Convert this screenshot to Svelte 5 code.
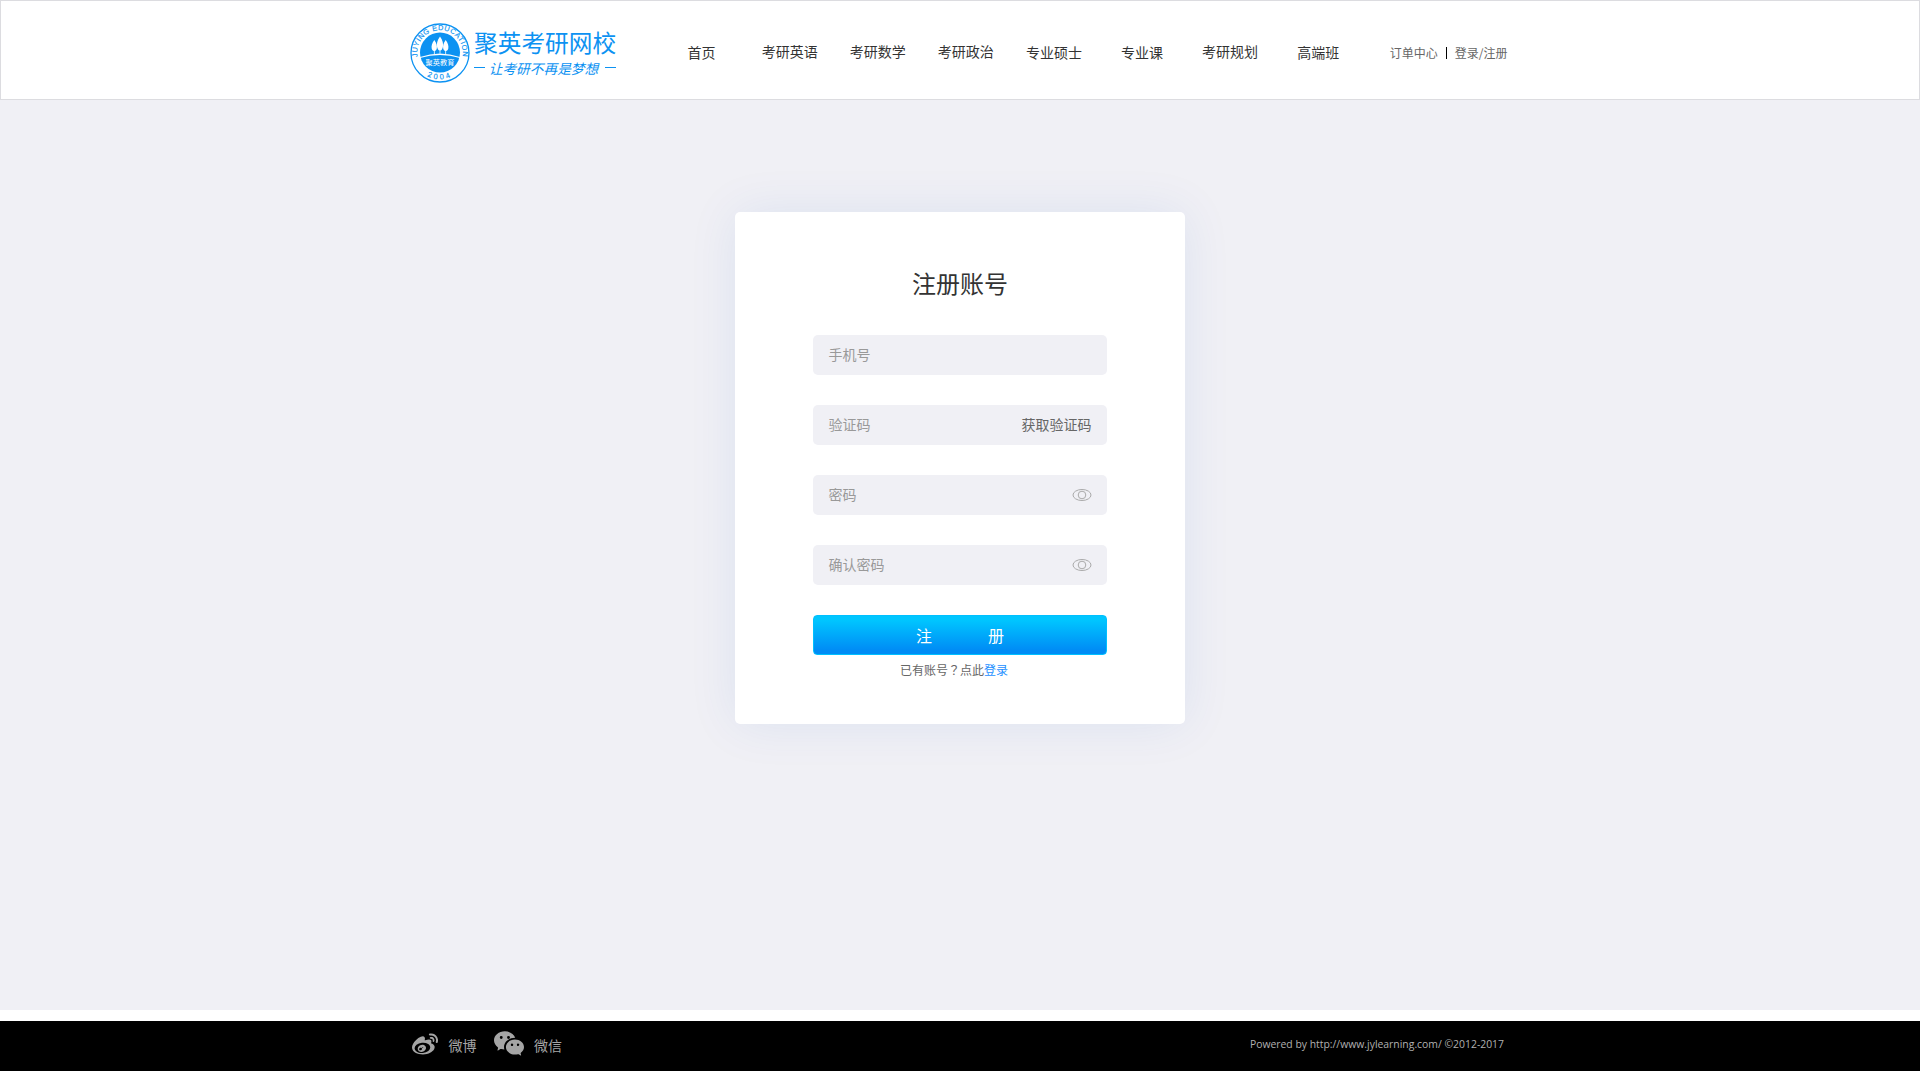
<script>
  const nav = [
    { label: '首页' },
    { label: '考研英语', raised: true },
    { label: '考研数学', raised: true },
    { label: '考研政治', raised: true },
    { label: '专业硕士' },
    { label: '专业课' },
    { label: '考研规划', raised: true },
    { label: '高端班' }
  ];
  const fields = [
    { label: '手机号' },
    { label: '验证码', action: '获取验证码' },
    { label: '密码', eye: true },
    { label: '确认密码', eye: true }
  ];
</script>

<div class="page">
  <header>
    <div class="inner">
      <a class="logo" href="#home">
        <svg class="badge" width="60" height="60" viewBox="0 0 60 60">
          <defs>
            <path id="arc-top" d="M9.500 40A22.800 22.800 0 1 1 50.500 40" />
            <path id="arc-bottom" d="M10 47.500A27 27 0 0 0 50 47.500" />
          </defs>
          <circle cx="30" cy="30" r="29" fill="#fff" stroke="#0c92f2" stroke-width="1.300" />
          <circle cx="30" cy="29.600" r="20" fill="#0c92f2" />
          <g fill="#fff">
            <path d="M24.300 17c2.300 3 3 6 2.500 8.500c-.3 1.500-1.200 2.300-2.100 2.500v3h-.8v-3c-1-.2-1.900-1-2.200-2.500c-.5-2.500.3-5.500 2.600-8.500z" />
            <path d="M30 13.500c2.800 3.600 3.500 7.500 2.900 10.500c-.4 2-1.400 3.300-2.500 3.500v3h-.8v-3c-1.100-.2-2.100-1.500-2.500-3.500c-.6-3 .1-6.900 2.900-10.500z" />
            <path d="M35.700 17c2.300 3 3.100 6 2.600 8.500c-.3 1.500-1.200 2.300-2.200 2.500v3h-.8v-3c-.9-.2-1.800-1-2.100-2.500c-.5-2.500.2-5.500 2.500-8.500z" />
            <path d="M10 34Q30 27 50 34L50 35Q30 29 10 35z" />
          </g>
          <text class="inside" x="30" y="41.600" text-anchor="middle">聚英教育</text>
          <text class="ring"><textPath href="#arc-top" startOffset="50%" text-anchor="middle">JUYING EDUCATION</textPath></text>
          <text class="ring year"><textPath href="#arc-bottom" startOffset="50%" text-anchor="middle">2004</textPath></text>
        </svg>
        <span class="brand">
          <span class="name">聚英考研网校</span>
          <span class="slogan"><i></i><em>让考研不再是梦想</em><i></i></span>
        </span>
      </a>
      <nav>
        {#each nav as item}
          <a href="#nav" class:raised={item.raised}>{item.label}</a>
        {/each}
      </nav>
      <div class="user">
        <a href="#orders">订单中心</a><b></b><a href="#login">登录/注册</a>
      </div>
    </div>
  </header>

  <main>
    <form class="card">
      <h1>注册账号</h1>
      {#each fields as field}
        <label class="field">
          <span>{field.label}</span>
          {#if field.action}<span class="action">{field.action}</span>{/if}
          {#if field.eye}
            <svg width="20" height="14" viewBox="0 0 20 14" fill="none" stroke="#aaa">
              <ellipse cx="10" cy="7" rx="9" ry="5.500" />
              <circle cx="10" cy="7" r="3.800" />
            </svg>
          {/if}
        </label>
      {/each}
      <button type="button"><span>注</span><span>册</span></button>
      <p>已有账号<span class="mark">？</span>点此<a href="#login">登录</a></p>
    </form>
  </main>

  <footer>
    <div class="inner">
      <svg class="weibo" width="26" height="22" viewBox="0 150 1792 1500" fill="#a5a5a5">
        <path d="M675 1284q21-34 11-69t-45-50q-34-14-73-1t-60 46q-22 34-13 68.500t43 50.500 74.500 2.500 62.500-47.500zm94-121q8-13 3.500-26.500t-17.500-18.500q-14-5-28.500.5t-21.500 18.500q-17 31 13 45 14 5 29-.5t22-18.500zm174 107q-45 102-158 150t-224 12q-107-34-147.500-126.500t6.500-187.500q47-93 151.500-139t210.500-19q111 29 158.500 119.500t2.500 190.500zm312-160q-9-96-89-170t-208.500-109-274.500-21q-223 23-369.500 141.500t-132.500 264.500q9 96 89 170t208.500 109 274.500 21q223-23 369.500-141.500t132.500-264.500zm308 4q0 68-37 139.500t-109 137-168.500 117.500-226 83-270.500 31-275-33.500-240.500-93-171.500-151-65-199.500q0-115 69.500-245t197.500-258q169-169 341.500-236t246.500 7q65 64 20 209-4 14-1 20t10 7 14.500-.5 13.500-3.500l6-2q139-59 246-59t153 61q45 63 0 178-2 13-4.500 20t4.500 12.500 12 7.500 17 6q57 18 103 47t80 81.500 34 116.500zm-74-624q42 47 54.500 108.500t-6.500 117.500q-8 23-29.500 34t-44.500 4q-23-8-34-29.500t-4-44.500q20-63-24-111t-107-35q-24 5-45-8t-25-37q-5-24 8-44.500t37-25.500q60-13 119 5.500t101 65.500zm181-163q87 96 112.500 222.500t-13.500 241.500q-9 27-34 40t-52 4-40-34-5-52q28-82 10-172t-80-158q-62-69-148-95.500t-173-8.500q-28 6-52-9.500t-30-43.500 9.500-51.500 43.500-29.500q123-26 244 11.500t208 134.500z" />
      </svg>
      <span class="social">微博</span>
      <svg class="wechat" width="30" height="25" viewBox="0 2 16 13" fill="#a5a5a5">
        <path d="M11.176 14.429c-2.665 0-4.826-1.800-4.826-4.018 0-2.220 2.159-4.020 4.824-4.020S16 8.191 16 10.411c0 1.210-.65 2.301-1.666 3.036a.32.32 0 0 0-.12.366l.218.810a.6.6 0 0 1 .029.117.166.166 0 0 1-.162.162.2.2 0 0 1-.092-.03l-1.057-.61a.5.5 0 0 0-.256-.074.5.5 0 0 0-.142.021 5.700 5.700 0 0 1-1.576.220M9.064 9.542a.647.647 0 1 0 .557-1 .645.645 0 0 0-.646.647.6.6 0 0 0 .09.353Zm3.232.001a.646.646 0 1 0 .546-1 .645.645 0 0 0-.644.644.63.63 0 0 0 .098.356" />
        <path d="M0 6.826c0 1.455.781 2.765 2.001 3.656a.385.385 0 0 1 .143.439l-.161.6-.1.373a.5.5 0 0 0-.032.140.19.19 0 0 0 .193.193q.06 0 .111-.029l1.268-.733a.6.6 0 0 1 .308-.088q.088 0 .171.025a6.800 6.800 0 0 0 1.625.260 4.500 4.500 0 0 1-.177-1.251c0-2.936 2.785-5.020 5.824-5.020l.15.002C10.587 3.429 8.392 2 5.796 2 2.596 2 0 4.160 0 6.826m4.632-1.555a.77.77 0 1 1-1.540 0 .77.77 0 0 1 1.540 0m3.875 0a.77.77 0 1 1-1.540 0 .77.77 0 0 1 1.540 0" />
      </svg>
      <span class="social">微信</span>
      <span class="copyright">Powered by http://www.jylearning.com/ ©2012-2017</span>
    </div>
  </footer>
</div>

<style>
  :global(body) {
    margin: 0;
    background: #fff;
  }
  .page {
    height: 1071px;
    display: flex;
    flex-direction: column;
    overflow: hidden;
    font-family: 'Noto Sans CJK SC', sans-serif;
    color: #333;
  }
  a {
    color: inherit;
    text-decoration: none;
  }
  .inner {
    width: 1100px;
    height: 100%;
    margin: 0 auto;
    display: flex;
    align-items: center;
  }
  header {
    box-sizing: border-box;
    height: 100px;
    border: 1px solid #dcdce0;
    background: #fff;
  }
  .logo {
    width: 247.500px;
    display: flex;
    align-items: center;
    padding-top: 6px;
    color: #0c92f2;
  }
  .badge {
    display: block;
    flex: none;
  }
  .badge text {
    font-size: 7.200px;
    fill: #fff;
  }
  .badge .ring {
    font-family: 'Liberation Sans', sans-serif;
    font-size: 7.300px;
    letter-spacing: 0.500px;
    fill: #0c92f2;
    stroke: #0c92f2;
    stroke-width: 0.150px;
  }
  .badge .year {
    font-size: 7.500px;
    letter-spacing: 2.500px;
  }
  .brand {
    width: 142px;
    margin-left: 4px;
  }
  .name {
    display: block;
    font-size: 23.700px;
    line-height: 32px;
    margin-top: -3px;
    white-space: nowrap;
  }
  .slogan {
    display: flex;
    align-items: center;
    justify-content: space-between;
    height: 20px;
  }
  .slogan i {
    width: 11px;
    height: 1px;
    background: currentColor;
  }
  .slogan em {
    margin-left: -3px;
    font-size: 13.700px;
    line-height: 20px;
    white-space: nowrap;
  }
  nav {
    display: flex;
    padding-top: 4px;
  }
  nav a {
    width: 88.100px;
    text-align: center;
    font-size: 14px;
    line-height: 20px;
  }
  .raised {
    margin-top: -1px;
  }
  .user {
    display: flex;
    align-items: center;
    margin-left: 27.500px;
    padding-top: 5px;
    font-size: 12px;
    line-height: 18px;
    color: #666;
    white-space: nowrap;
  }
  .user b {
    width: 1px;
    height: 12px;
    margin: 0 8px 0 8px;
    background: #000;
  }
  main {
    height: 910px;
    background: #f0f0f5;
    overflow: hidden;
  }
  .card {
    box-sizing: border-box;
    width: 450px;
    height: 512px;
    margin: 112px auto 0;
    padding: 51px 78px 0;
    border-radius: 5px;
    background: #fff;
    box-shadow: 0 0 50px rgba(0, 84, 190, 0.085);
  }
  h1 {
    margin: 0 0 32px;
    font-size: 24px;
    line-height: 40px;
    font-weight: 400;
    text-align: center;
  }
  .field {
    box-sizing: border-box;
    height: 40px;
    margin-bottom: 30px;
    padding: 0 15.500px 0 15.500px;
    display: flex;
    align-items: center;
    justify-content: space-between;
    border-radius: 5px;
    background: #f0f0f5;
    font-size: 14px;
    line-height: 20px;
    color: #999;
  }
  .field span {
    margin-top: -2px;
  }
  .field .action {
    color: #666;
  }
  button {
    box-sizing: border-box;
    width: 100%;
    height: 40px;
    padding: 0;
    display: flex;
    align-items: center;
    justify-content: center;
    gap: 56px;
    border: 1px solid #00c0ff;
    border-radius: 4px;
    background: linear-gradient(#00c6ff 10%, #008cf5 90%);
    font: 16px/24px 'Noto Sans CJK SC', sans-serif;
    color: #fff;
  }
  p {
    margin: 6px 0 0 87px;
    font-size: 12px;
    line-height: 18px;
    color: #666;
    white-space: nowrap;
  }
  p a {
    color: #1e90ff;
  }
  .mark {
    font-family: 'Noto Sans CJK TC', sans-serif;
  }
  footer {
    height: 50px;
    margin-top: 11px;
    background: #000;
    color: #a5a5a5;
  }
  footer .inner {
    align-items: flex-start;
  }
  .weibo {
    margin: 12px 0 0 2px;
  }
  .wechat {
    margin: 10px 0 0 17px;
  }
  .social {
    margin: 14px 0 0 10.500px;
    font-size: 14px;
    line-height: 20px;
  }
  .copyright {
    margin: 14px 6px 0 auto;
    font: 500 10.400px/18px 'Open Sans', sans-serif;
    color: #b0b0b0;
    white-space: nowrap;
  }
</style>
